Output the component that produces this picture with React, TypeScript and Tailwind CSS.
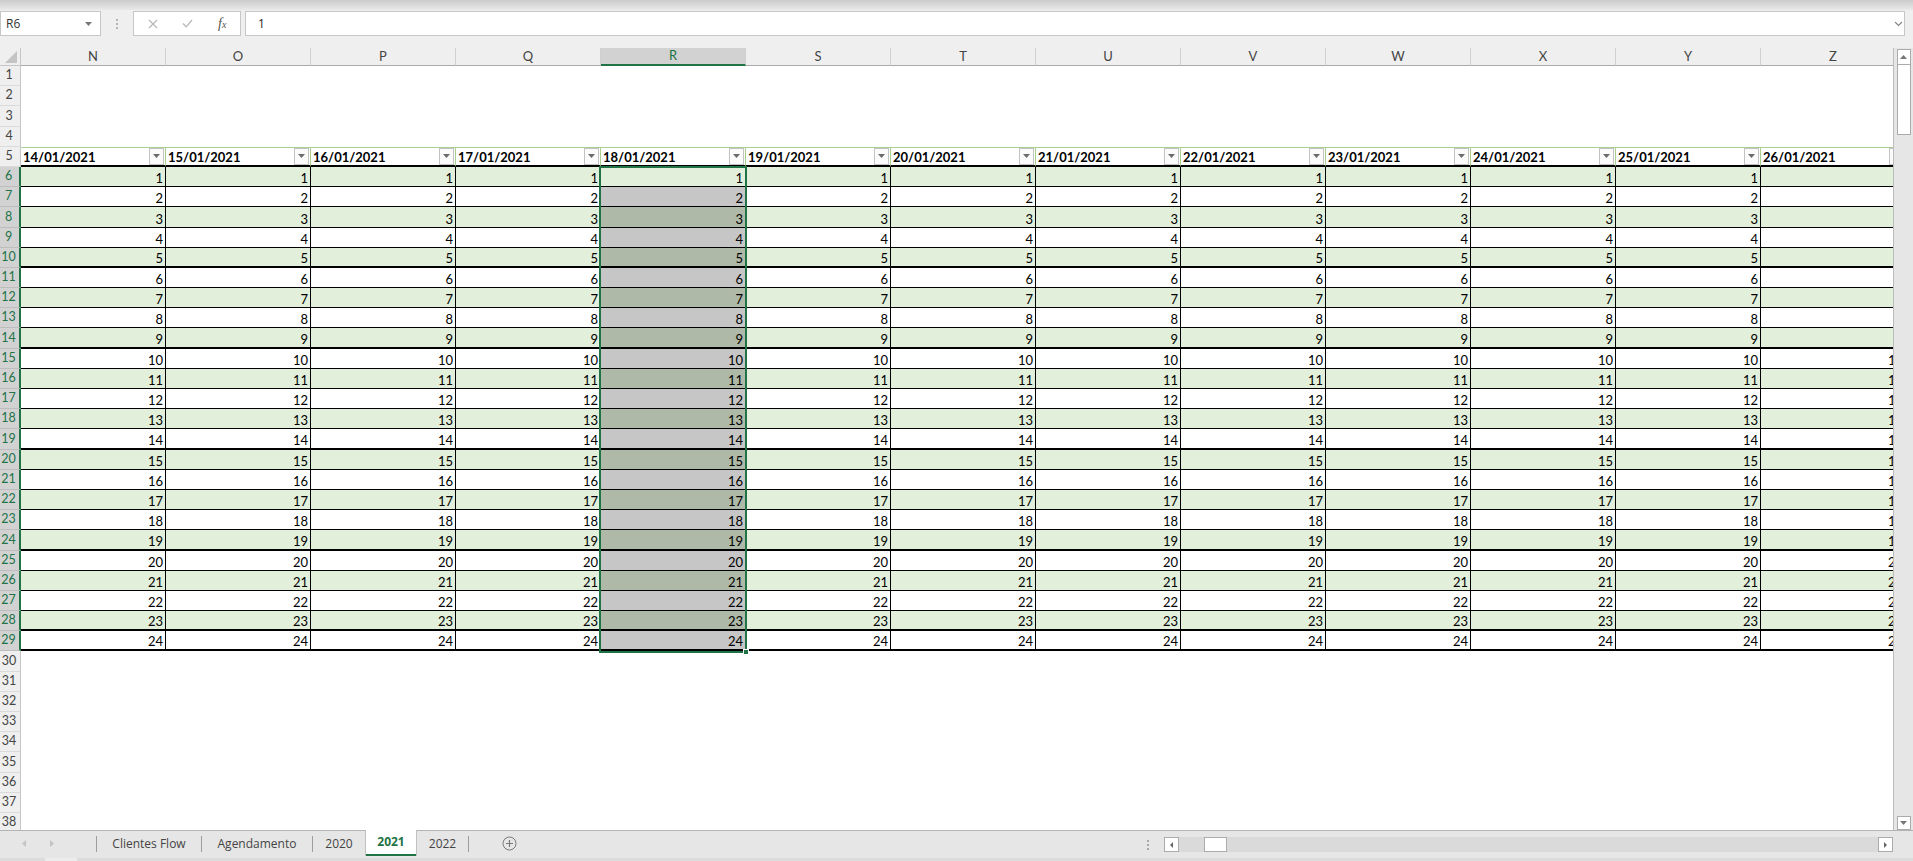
import React from 'react';

const COLS = ['N', 'O', 'P', 'Q', 'R', 'S', 'T', 'U', 'V', 'W', 'X', 'Y', 'Z'];
const DATES = [
  '14/01/2021',
  '15/01/2021',
  '16/01/2021',
  '17/01/2021',
  '18/01/2021',
  '19/01/2021',
  '20/01/2021',
  '21/01/2021',
  '22/01/2021',
  '23/01/2021',
  '24/01/2021',
  '25/01/2021',
  '26/01/2021',
];
const SEL_COL = 4;
const THICK_AFTER = [10, 14, 19, 24, 28, 29];
const ROWS = Array.from({ length: 38 }, (_, i) => i + 1);

const FilterButton: React.FC = () => (
  <div className="w-[15px] h-[17px] shrink-0 border border-[#c3c3c3] bg-[#fbfbfb] flex items-center justify-center">
    <svg width="7" height="4" viewBox="0 0 7 4">
      <path d="M0 0h7L3.5 4z" fill="#6b6b6b" />
    </svg>
  </div>
);

const RowHeader: React.FC<{ n: number }> = ({ n }) => {
  const sel = n >= 6 && n <= 29;
  return (
    <div
      className={`w-[21px] shrink-0 h-full flex items-center justify-center pr-[2px] text-[12.5px] border-b ${
        sel
          ? 'bg-[#d2d2d2] text-[#217346] border-r-2 border-r-[#217346] border-b-[#bdbdbd]'
          : 'bg-[#efefef] text-[#444] border-r border-r-[#c6c6c6] border-b-[#dadada]'
      }`}
    >
      {n}
    </div>
  );
};

const HeaderRow: React.FC = () => (
  <>
    {DATES.map((d) => (
      <div
        key={d}
        className="w-[145px] shrink-0 h-full bg-white border-t border-t-[#a9d08e] border-r border-r-[#a9d08e] border-b-2 border-b-black flex items-end pl-[2px] pr-[1px]"
      >
        <span className="flex-1 font-bold text-black leading-[14px] pb-[1px]">{d}</span>
        <FilterButton />
      </div>
    ))}
  </>
);

const DataRow: React.FC<{ n: number }> = ({ n }) => {
  const value = n - 5;
  const green = n % 2 === 0;
  const thick = THICK_AFTER.includes(n);
  return (
    <>
      {COLS.map((c, i) => {
        let bg = green ? 'bg-[#e2efda]' : 'bg-white';
        if (i === SEL_COL && n > 6) bg = green ? 'bg-[#aeb9a7]' : 'bg-[#c6c6c6]';
        return (
          <div
            key={c}
            className={`w-[145px] shrink-0 h-full border-r border-r-black ${
              thick ? 'border-b-2' : 'border-b'
            } border-b-black ${bg} flex items-end justify-end pr-[2px] leading-[14px] pb-[1px] text-black`}
          >
            {value}
          </div>
        );
      })}
    </>
  );
};

const FormulaBar: React.FC = () => (
  <div className="h-[38px] flex items-start pt-[1px] bg-[#efefef]">
    <div className="w-[101px] h-[25px] bg-white border border-[#c6c6c6] flex items-center justify-between pl-[5px] pr-[8px] text-[12px] text-[#333]">
      <span>R6</span>
      <svg width="7" height="4" viewBox="0 0 7 4">
        <path d="M0 0h7L3.5 4z" fill="#777" />
      </svg>
    </div>
    <div className="w-[32px] h-[25px] flex flex-col items-center justify-center gap-[2px]">
      <span className="w-[2px] h-[2px] bg-[#b5b5b5]" />
      <span className="w-[2px] h-[2px] bg-[#b5b5b5]" />
      <span className="w-[2px] h-[2px] bg-[#b5b5b5]" />
    </div>
    <div className="w-[108px] h-[25px] bg-white border border-[#c6c6c6] flex items-center">
      <svg className="ml-[14px]" width="10" height="10" viewBox="0 0 10 10">
        <path d="M1 1l8 8M9 1l-8 8" stroke="#b8b8b8" strokeWidth="1.2" />
      </svg>
      <svg className="ml-[24px]" width="11" height="9" viewBox="0 0 11 9">
        <path d="M1 4.5l3.2 3.3L10 1" stroke="#b8b8b8" strokeWidth="1.3" fill="none" />
      </svg>
      <span className="ml-[25px] italic font-['Liberation_Serif',serif] text-[14px] text-[#555] leading-none">
        f<span className="text-[10px]">x</span>
      </span>
    </div>
    <div className="w-[1660px] h-[25px] ml-[4px] bg-white border border-[#c6c6c6] flex items-center justify-between pl-[12px] pr-[1px] text-[12px] text-[#222]">
      <span>1</span>
      <svg width="9" height="6" viewBox="0 0 9 6">
        <path d="M1 1l3.5 3.5L8 1" stroke="#888" strokeWidth="1.2" fill="none" />
      </svg>
    </div>
  </div>
);

const VScroll: React.FC = () => (
  <div className="w-[20px] shrink-0 h-full bg-[#e6e6e6] border-l border-[#bcbcbc] flex flex-col items-center">
    <div className="mt-[1px] w-[14px] h-[16px] bg-white border border-[#ababab] flex items-center justify-center">
      <svg width="7" height="4" viewBox="0 0 7 4">
        <path d="M0 4h7L3.5 0z" fill="#777" />
      </svg>
    </div>
    <div className="w-[14px] h-[70px] bg-white border border-[#ababab] border-t-0" />
    <div className="flex-1" />
    <div className="w-[14px] h-[14px] bg-white border border-[#ababab] flex items-center justify-center">
      <svg width="7" height="4" viewBox="0 0 7 4">
        <path d="M0 0h7L3.5 4z" fill="#777" />
      </svg>
    </div>
  </div>
);

const TabSep: React.FC = () => <div className="w-px h-[16px] bg-[#9e9e9e] self-center shrink-0" />;

const TabBar: React.FC = () => (
  <div className="h-[28px] shrink-0 bg-[#e6e6e6] border-t border-[#b4b4b4] flex items-start text-[12px] text-[#444] font-['Open_Sans',sans-serif]">
    <div className="w-[96px] h-[25px] shrink-0 flex items-center">
      <svg className="ml-[22px]" width="4" height="7" viewBox="0 0 4 7">
        <path d="M4 0v7L0 3.5z" fill="#c4c4c4" />
      </svg>
      <svg className="ml-[24px]" width="4" height="7" viewBox="0 0 4 7">
        <path d="M0 0v7l4-3.5z" fill="#c4c4c4" />
      </svg>
    </div>
    <div className="h-[25px] flex items-center">
      <TabSep />
    </div>
    <div className="w-[104px] h-[25px] flex items-center justify-center">Clientes Flow</div>
    <div className="h-[25px] flex items-center">
      <TabSep />
    </div>
    <div className="w-[110px] h-[25px] flex items-center justify-center">Agendamento</div>
    <div className="h-[25px] flex items-center">
      <TabSep />
    </div>
    <div className="w-[52px] h-[25px] flex items-center justify-center">2020</div>
    <div className="w-[52px] h-[26px] -mt-px bg-white border-x border-[#c0c0c0] flex flex-col">
      <div className="flex-1 flex items-center justify-center font-bold text-[#217346]">2021</div>
      <div className="h-[2px] bg-[#217346]" />
    </div>
    <div className="w-[51px] h-[25px] flex items-center justify-center">2022</div>
    <div className="h-[25px] flex items-center">
      <TabSep />
    </div>
    <div className="h-[25px] flex items-center ml-[33px]">
      <svg width="15" height="15" viewBox="0 0 15 15">
        <circle cx="7.5" cy="7.5" r="6.5" stroke="#7a7a7a" strokeWidth="1" fill="none" />
        <path d="M7.5 4v7M4 7.5h7" stroke="#7a7a7a" strokeWidth="1.2" />
      </svg>
    </div>
    <div className="flex-1" />
    <div className="h-[27px] flex items-center">
      <div className="flex flex-col gap-[2px] mr-[15px]">
        <span className="w-[2px] h-[2px] bg-[#a8a8a8]" />
        <span className="w-[2px] h-[2px] bg-[#a8a8a8]" />
        <span className="w-[2px] h-[2px] bg-[#a8a8a8]" />
      </div>
      <div className="w-[729px] h-[15px] flex">
        <div className="w-[15px] h-full bg-white border border-[#ababab] flex items-center justify-center">
          <svg width="3" height="6" viewBox="0 0 3 6">
            <path d="M3 0v6L0 3z" fill="#666" />
          </svg>
        </div>
        <div className="flex-1 h-full bg-[#dadada] flex">
          <div className="ml-[25px] w-[23px] h-full bg-white border border-[#ababab]" />
        </div>
        <div className="w-[15px] h-full bg-white border border-[#ababab] flex items-center justify-center">
          <svg width="3" height="6" viewBox="0 0 3 6">
            <path d="M0 0v6l3-3z" fill="#666" />
          </svg>
        </div>
      </div>
      <div className="w-[20px]" />
    </div>
  </div>
);

export default function App() {
  return (
    <div className="w-[1913px] h-[861px] overflow-hidden bg-[#efefef] flex flex-col font-['Open_Sans',sans-serif]">
      <div className="h-[10px] shrink-0 bg-gradient-to-b from-[#cbcbcb] to-[#e9e9e9]" />
      <FormulaBar />
      <div className="h-[782px] shrink-0 flex">
        <div className="relative w-[1893px] h-full overflow-hidden bg-white font-['Lato',sans-serif] text-[13px]">
          <div className="h-[18px] flex">
            <div className="w-[21px] shrink-0 h-full bg-[#efefef] border-r border-b border-[#c6c6c6] flex items-end justify-end pr-[3px] pb-[2px]">
              <svg width="12" height="12" viewBox="0 0 12 12">
                <path d="M12 0v12H0z" fill="#c4c4c4" />
              </svg>
            </div>
            {COLS.map((c, i) => (
              <div
                key={c}
                className={`w-[145px] shrink-0 h-full border-r border-r-[#d0d0d0] flex items-center justify-center ${
                  i === SEL_COL
                    ? 'bg-[#d2d2d2] text-[#217346] border-b-2 border-b-[#217346]'
                    : 'bg-[#efefef] text-[#444] border-b border-b-[#ababab]'
                }`}
              >
                {c}
              </div>
            ))}
          </div>
          {ROWS.map((n) => (
            <div key={n} className="h-[20.2px] flex">
              <RowHeader n={n} />
              {n === 5 ? <HeaderRow /> : n >= 6 && n <= 29 ? <DataRow n={n} /> : <div className="flex-1" />}
            </div>
          ))}
          <div className="absolute left-[599px] top-[118px] w-[148px] h-[487px] border-2 border-[#217346] pointer-events-none">
            <div className="absolute -right-[4px] -bottom-[4px] w-[6px] h-[6px] bg-[#217346] border border-white" />
          </div>
        </div>
        <VScroll />
      </div>
      <TabBar />
      <div className="flex-1 bg-[#dcdcdc] flex">
        <div className="ml-[45px] w-[32px] bg-[#ececec]" />
      </div>
    </div>
  );
}
